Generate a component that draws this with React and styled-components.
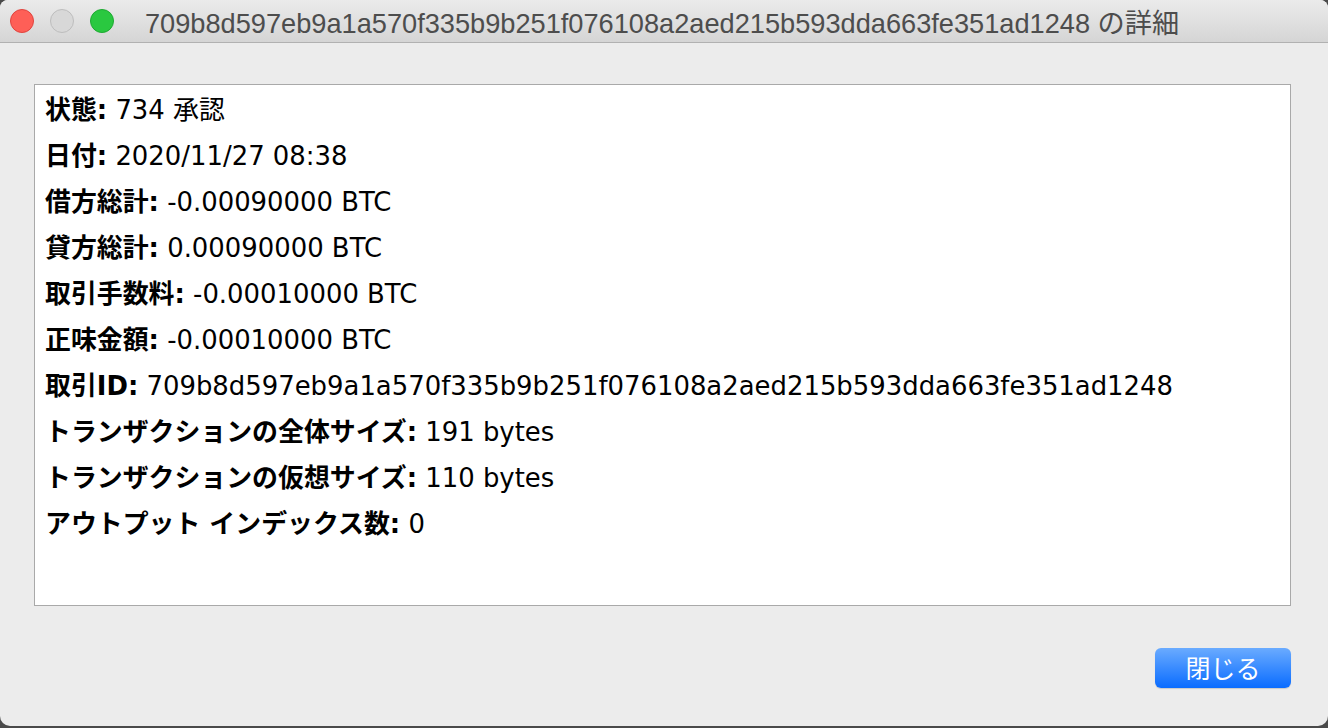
import React from 'react';
import styled, { createGlobalStyle } from 'styled-components';

const GlobalStyle = createGlobalStyle`
  html, body {
    margin: 0;
    padding: 0;
    width: 1328px;
    height: 728px;
    overflow: hidden;
    background: #4a4a4a;
  }
`;

const Window = styled.div`
  display: flex;
  flex-direction: column;
  width: 1328px;
  height: 726px;
  background: #ececec;
  border-radius: 8px 8px 10px 10px;
  overflow: hidden;
`;

const TitleBar = styled.div`
  display: flex;
  align-items: center;
  height: 42px;
  padding-left: 10px;
  background: linear-gradient(#ebebeb, #d5d5d5);
  border-bottom: 1px solid #b1b1b1;
`;

const Lights = styled.div`
  display: flex;
  gap: 16px;
`;

const Light = styled.span`
  width: 24px;
  height: 24px;
  border-radius: 50%;
  box-sizing: border-box;
  background: ${({ color }) => color};
  border: 1px solid ${({ edge }) => edge};
`;

const Title = styled.div`
  margin-left: 31px;
  font: 27.2px 'Liberation Sans', 'Noto Sans CJK JP', sans-serif;
  color: #4d4d4d;
  white-space: nowrap;
`;

const Body = styled.div`
  flex: 1;
  display: flex;
  flex-direction: column;
  padding: 41px 37px 0 34px;
`;

const Panel = styled.div`
  height: 518px;
  background: #fff;
  border: 1px solid #a9a9a9;
  padding: 2px 10px 0;
  font: 25.9px 'DejaVu Sans', 'Noto Sans CJK JP', sans-serif;
  color: #000;
`;

const Row = styled.div`
  line-height: 46px;
  white-space: nowrap;

  b {
    font-weight: bold;
  }
`;

const Footer = styled.div`
  display: flex;
  justify-content: flex-end;
  padding-top: 42px;
`;

const Button = styled.button`
  width: 136px;
  height: 40px;
  border: none;
  border-radius: 6px;
  background: linear-gradient(#6aabff, #0a6cff);
  box-shadow: 0 1px 1px rgba(0, 0, 0, 0.15);
  color: #fff;
  font: 25px 'Noto Sans CJK JP', sans-serif;
  padding: 0 0 3px;
  line-height: 36px;
`;

const rows = [
  ['状態:', '734 承認'],
  ['日付:', '2020/11/27 08:38'],
  ['借方総計:', '-0.00090000 BTC'],
  ['貸方総計:', '0.00090000 BTC'],
  ['取引手数料:', '-0.00010000 BTC'],
  ['正味金額:', '-0.00010000 BTC'],
  ['取引ID:', '709b8d597eb9a1a570f335b9b251f076108a2aed215b593dda663fe351ad1248'],
  ['トランザクションの全体サイズ:', '191 bytes'],
  ['トランザクションの仮想サイズ:', '110 bytes'],
  ['アウトプット インデックス数:', '0'],
];

export default function App() {
  return (
    <>
      <GlobalStyle />
      <Window>
        <TitleBar>
          <Lights>
            <Light color="#fe5f57" edge="#e0443e" />
            <Light color="#d8d8d8" edge="#bdbdbd" />
            <Light color="#2ac840" edge="#1ea932" />
          </Lights>
          <Title>709b8d597eb9a1a570f335b9b251f076108a2aed215b593dda663fe351ad1248 の詳細</Title>
        </TitleBar>
        <Body>
          <Panel>
            {rows.map(([label, value]) => (
              <Row key={label}>
                <b>{label}</b> {value}
              </Row>
            ))}
          </Panel>
          <Footer>
            <Button>閉じる</Button>
          </Footer>
        </Body>
      </Window>
    </>
  );
}
